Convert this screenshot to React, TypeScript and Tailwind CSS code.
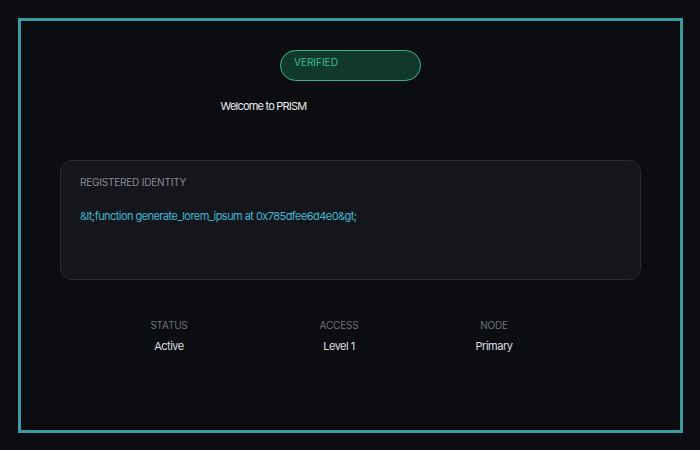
const STATS = [
  { label: "STATUS", value: "Active", cls: "ml-[98px]" },
  { label: "ACCESS", value: "Level 1", cls: "ml-[70px]" },
  { label: "NODE", value: "Primary", cls: "ml-[55px]" },
];

export default function App() {
  return (
    <div className="min-h-[450px] w-[700px] bg-[#0c0d11] pt-[18px] font-['Inter',sans-serif]">
      <div className="ml-[18px] flex h-[415px] w-[665px] flex-col border-[3px] border-[#3a9ba0]">
        {/* Badge */}
        <div className="mt-[29px] flex justify-center">
          <div className="h-[31px] w-[141px] rounded-full border border-[#3bb68b] bg-[#10382b] pl-[13px] pt-[5px] text-[10px] leading-[12px] text-[#3cc28f]">
            VERIFIED
          </div>
        </div>

        <div className="mx-auto mt-[18px] w-[260px] text-[11px] leading-[14px] tracking-[-0.8px] text-[#e8e9ec]">
          Welcome to PRISM
        </div>

        {/* Identity card */}
        <div className="mx-[39px] mt-[47px] h-[120px] rounded-xl border border-[#2a2c34] bg-[#15161c] px-[19px] pt-[15px]">
          <p className="text-[10px] leading-[12px] tracking-[-0.2px] text-[#8a8d96]">REGISTERED IDENTITY</p>
          <p className="mt-[21px] text-[11px] leading-[14px] tracking-[-0.55px] text-[#42b7d2]">
            {"&lt;function generate_lorem_ipsum at 0x785dfee6d4e0&gt;"}
          </p>
        </div>

        {/* Stats */}
        <div className="mt-[39px] flex">
          {STATS.map((s) => (
            <div key={s.label} className={`w-[100px] text-center ${s.cls}`}>
              <p className="text-[10px] leading-[12px] tracking-[-0.2px] text-[#6e717a]">{s.label}</p>
              <p className="mt-[8px] text-[11px] leading-[14px] tracking-[-0.5px] text-[#dcdee2]">{s.value}</p>
            </div>
          ))}
        </div>
      </div>
    </div>
  );
}
